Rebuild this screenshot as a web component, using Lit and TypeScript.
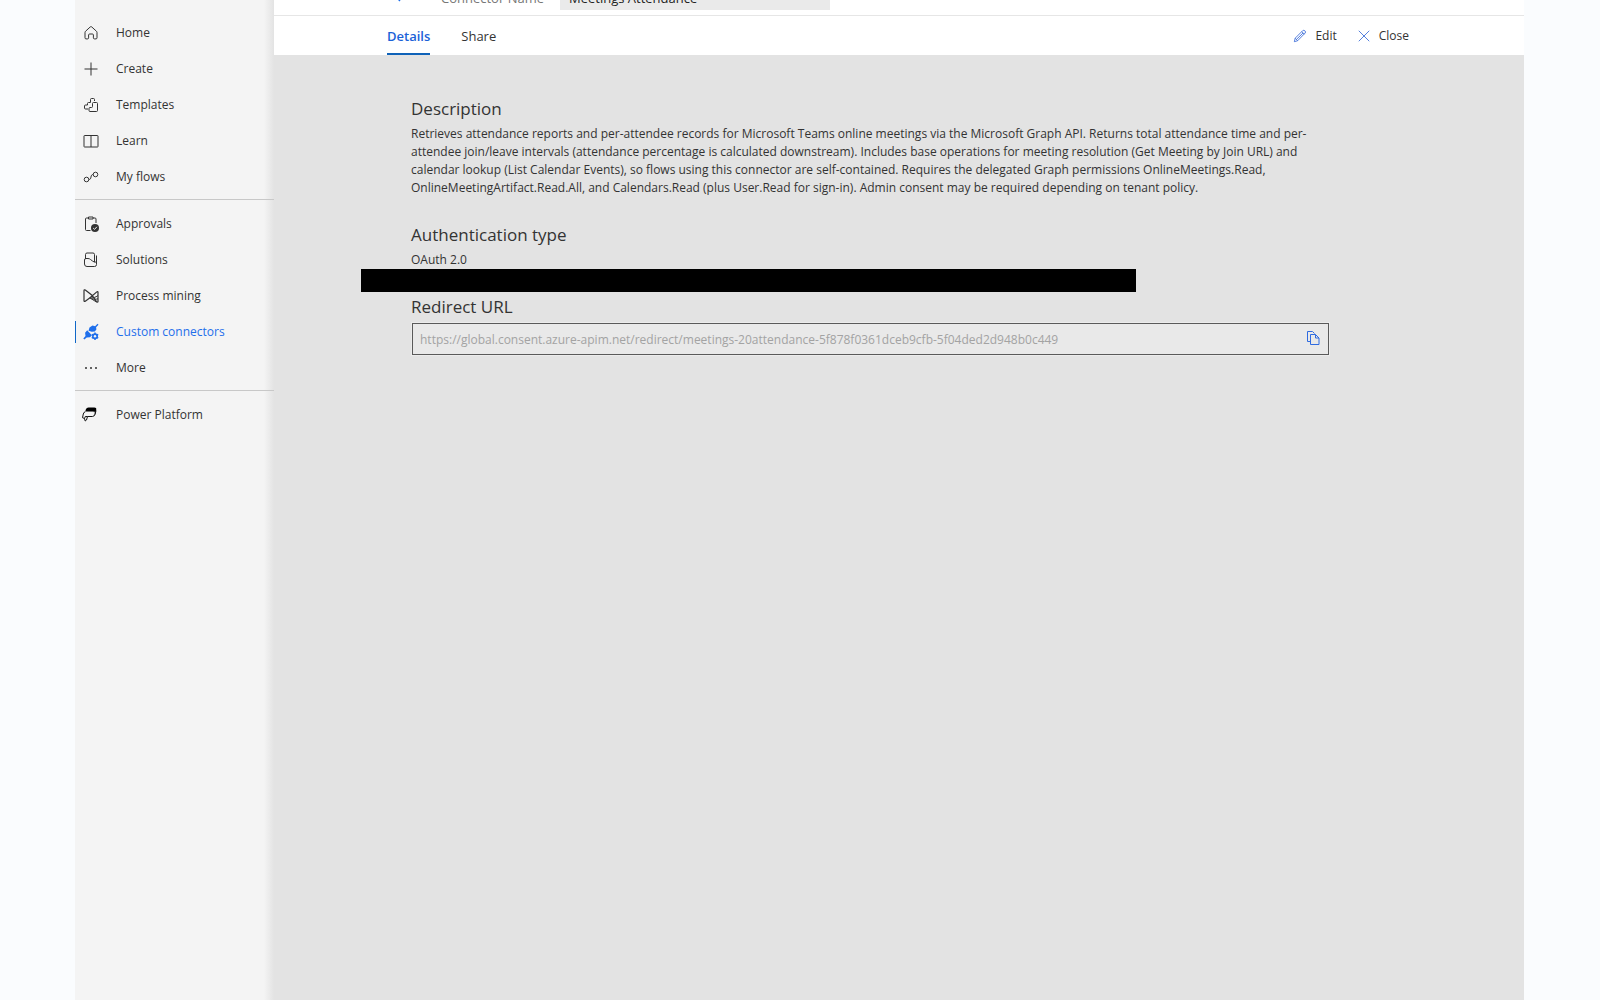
import { LitElement, html, css, svg, nothing } from "lit";
import type { SVGTemplateResult } from "lit";
import { customElement, state } from "lit/decorators.js";
import { classMap } from "lit/directives/class-map.js";

interface NavItem {
  label: string;
  icon: SVGTemplateResult;
  active?: boolean;
}

const icons = {
  home: svg`<path d="M2 7.6c0-.6.2-1 .6-1.400L7.300 1.900c.4-.4 1-.4 1.400 0l4.700 4.300c.4.4.6.8.6 1.400v5.200c0 .7-.4 1.100-1 1.100h-1.600c-.6 0-1-.4-1-1V10c0-.7-.4-1-1-1H6.600c-.6 0-1 .3-1 1v2.900c0 .6-.4 1-1 1H3c-.6 0-1-.4-1-1.100z"/>`,
  create: svg`<path d="M8 1.500v13M1.500 8h13"/>`,
  templates: svg`<path d="M5 12H2.500q-1 0-1-1V9q0-1 1-1H4.500V6.500q0-1 1-1H7.500V2.500q0-1 1-1h2q1 0 1 1V4"/><path d="M10.500 5.500h3q1 0 1 1v7q0 1-1 1H7q-1 0-1-1V11.500q0-1 1-1h1.500q1 0 1-1v-3q0-1 1-1z"/>`,
  learn: svg`<path d="M1.500 2.500h13q.5 0 .5.5v10.500q0 .5-.5.5h-13q-.5 0-.5-.5V3q0-.5.5-.5zM8 2.500V14"/>`,
  flows: svg`<circle cx="3.500" cy="10.500" r="2.300"/><circle cx="12.500" cy="5.500" r="2.300"/><path d="M5.800 10.500c1.700 0 2-1 2.200-2.500s.6-2.500 2.200-2.500"/>`,
  approvals: svg`<path d="M7.500 14.500H3.500q-1 0-1-1V3q0-1 1-1h2M10 2h2q1 0 1 1V7M5.500 1h4.500v2H5.500z"/><circle class="solid" cx="12" cy="12" r="4"/><path class="light" d="M10.200 12.100l1.300 1.300 2.400-2.600"/>`,
  solutions: svg`<path d="M2.500 7V2.500q0-1.500 1.500-1.500h6q1.500 0 1.500 1.500v7.500M13.500 3.500V12M5 6.500H3q-1.500 0-1.500 1.500v4q0 2.500 2.500 2.500h7.500q2 0 2-2v-2.500q-2 .8-4-1L7.500 7.500q-1-1-2.500-1z"/>`,
  mining: svg`<path stroke-width="1.200" d="M7 9.800L2.300 13.200q-1.300.700-1.300-.7V2.800q0-1.500 1.300-.7L9 7.200l4.500 6.500q1.500.9 1.500-.3V4.300q0-1.300-1.200-.4z"/><path d="M6.500 9.900c3.500.3 6-.6 8.500-2.300M8.500 10.600c2 .8 4.500.8 6.500.2M7 10l6.500 4"/>`,
  connectors: svg`<g class="solid"><path d="M5.500 6.800l1-3.300 3-2 2.600.7 2.400-2.400 1 1-2.400 2.400.3 2.200-1.600 2-3 .4z"/><path d="M.3 14.400l2.200-2.400-.4-3.200 2.100-2.600 4.700 5-1.900 2-3.300.2-2.300 2z"/><circle cx="12" cy="12.200" r="3"/></g><path stroke-width="1.500" d="M12 8.500v7.400M8.800 10.300l6.400 3.800M15.200 10.300l-6.400 3.800"/><circle class="hole" cx="12" cy="12.200" r="1.200"/>`,
  more: svg`<g class="solid"><circle cx="3" cy="8" r="1"/><circle cx="8" cy="8" r="1"/><circle cx="13" cy="8" r="1"/></g>`,
  platform: svg`<path class="shade" d="M2.600 4.800h7q2 .2 1.500 2l-.5 2q1.500 0 2-1.800l.6-2.500z"/><path class="ink" d="M2.300 4.500L2.800 2.500Q3.500.5 5.500.5h5.800q2.400 0 1.900 2.400l-.5 2.100q-1-.5-2.700-.5z"/><path class="inkline" d="M13 3.500L12.200 7q-.5 2.300-2.800 2.500H4.500L3.500 13l-1.300 1L1.500 11.500-.5 10.700.3 7Q.7 5 2.300 4.800M1.500 11.500L2.300 9.500h2.200"/>`,
  edit: svg`<path d="M1.500 14.500l1-4 8.600-8.600q1.300-1 2.500.2 1.400 1.300.3 2.500L5.300 13.400zM10 3l3 3M2.500 10.500l2.800 2.900M4 11.900l7.500-7.400"/>`,
  close: svg`<path d="M2 2l12 12M14 2L2 14"/>`,
  copy: svg`<path d="M5 11.500H2.500v-10h5l2 2"/><path d="M5.500 4.500h5L14 8v6.500H5.500zM10.500 4.500V8H14"/>`,
  back: svg`<path stroke-width="2" d="M14.500 8h-13M8 1.500L1.500 8 8 14.500"/>`,
};

const drawIcon = (shape: SVGTemplateResult) =>
  html`<svg class="icon" viewBox="0 0 16 16" aria-hidden="true">${shape}</svg>`;

const iconStyles = css`
  .icon {
    display: block;
    flex: none;
    width: 16px;
    height: 16px;
    overflow: visible;
    fill: none;
    stroke: currentColor;
    stroke-width: 1;
  }
  .icon .solid {
    fill: currentColor;
    stroke: none;
  }
  .icon .shade {
    fill: #aaa;
    stroke: none;
  }
  .icon .ink {
    fill: #000;
    stroke: none;
  }
  .icon .inkline {
    stroke: #111;
  }
  .icon .light {
    stroke: #f4f4f4;
  }
  .icon .hole {
    fill: #f4f4f4;
    stroke: none;
  }
`;

const navGroups: NavItem[][] = [
  [
    { label: "Home", icon: icons.home },
    { label: "Create", icon: icons.create },
    { label: "Templates", icon: icons.templates },
    { label: "Learn", icon: icons.learn },
    { label: "My flows", icon: icons.flows },
  ],
  [
    { label: "Approvals", icon: icons.approvals },
    { label: "Solutions", icon: icons.solutions },
    { label: "Process mining", icon: icons.mining },
    { label: "Custom connectors", icon: icons.connectors, active: true },
    { label: "More", icon: icons.more },
  ],
  [{ label: "Power Platform", icon: icons.platform }],
];

@customElement("side-nav")
export class SideNav extends LitElement {
  static styles = [
    iconStyles,
    css`
      :host {
        display: block;
        padding-top: 15px;
        background: linear-gradient(to left, #e3e3e3, #f4f4f4 10px);
      }
      .group {
        list-style: none;
        margin: 0;
        padding: 0 0 4px;
      }
      .group + .group {
        border-top: 1px solid #c8c8c8;
        padding-top: 6px;
      }
      .link {
        display: flex;
        align-items: center;
        gap: 17px;
        height: 36px;
        padding-left: 8px;
        color: #333;
        text-decoration: none;
      }
      .link.active {
        color: #1f6feb;
        background: linear-gradient(#1068c8, #1068c8) left center / 1px 22px no-repeat;
      }
    `,
  ];

  render() {
    return html`<nav aria-label="Main">
      ${navGroups.map(
        (group) => html`<ul class="group">
          ${group.map(
            (item) => html`<li>
              <a
                href="#"
                class=${classMap({ link: true, active: !!item.active })}
                aria-current=${item.active ? "page" : nothing}
                >${drawIcon(item.icon)}<span>${item.label}</span></a
              >
            </li>`
          )}
        </ul>`
      )}
    </nav>`;
  }
}

@customElement("connector-details")
export class ConnectorDetails extends LitElement {
  static styles = [
    iconStyles,
    css`
      :host {
        display: block;
        padding: 42px 195px 42px 137px;
      }
      .heading {
        margin: 0 0 4px;
        font-size: 17px;
        font-weight: 400;
        line-height: 24px;
      }
      .text {
        margin: 0;
        line-height: 18px;
      }
      .section {
        margin-bottom: 26px;
      }
      .section.tight {
        margin-bottom: 0;
      }
      .redacted {
        max-width: 775px;
        height: 23px;
        margin: 0 0 3px -50px;
        background: #000;
      }
      .field {
        display: flex;
        align-items: center;
        box-sizing: border-box;
        height: 32px;
        margin-left: 1px;
        padding: 0 7px;
        border: 1px solid #5a5a5a;
        background: #e9e9e9;
        outline: 1px solid #ececec;
      }
      .url {
        flex: 1;
        min-width: 0;
        padding: 2px 0 0;
        border: 0;
        background: none;
        font: inherit;
        color: #a3a3a3;
      }
      .copy {
        padding: 0 0 2px;
        border: 0;
        background: none;
        color: #2f6be0;
      }
    `,
  ];

  @state() private url =
    "https://global.consent.azure-apim.net/redirect/meetings-20attendance-5f878f0361dceb9cfb-5f04ded2d948b0c449";

  render() {
    return html`
      <section class="section">
        <h2 class="heading">Description</h2>
        <p class="text">
          Retrieves attendance reports and per-attendee records for Microsoft Teams online meetings via the Microsoft
          Graph API. Returns total attendance time and per-attendee join/leave intervals (attendance percentage is
          calculated downstream). Includes base operations for meeting resolution (Get Meeting by Join URL) and calendar
          lookup (List Calendar Events), so flows using this connector are self-contained. Requires the delegated Graph
          permissions OnlineMeetings.Read, OnlineMeetingArtifact.Read.All, and Calendars.Read (plus User.Read for
          sign-in). Admin consent may be required depending on tenant policy.
        </p>
      </section>
      <section class="section tight">
        <h2 class="heading">Authentication type</h2>
        <p class="text">OAuth 2.0</p>
      </section>
      <div class="redacted"></div>
      <section>
        <h2 class="heading"><label for="redirect">Redirect URL</label></h2>
        <div class="field">
          <input id="redirect" class="url" type="text" readonly .value=${this.url} />
          <button class="copy" type="button" aria-label="Copy">${drawIcon(icons.copy)}</button>
        </div>
      </section>
    `;
  }
}

@customElement("app-root")
export class AppRoot extends LitElement {
  static styles = [
    iconStyles,
    css`
      :host {
        display: grid;
        grid-template-columns: 199px 1fr;
        box-sizing: border-box;
        min-height: 100vh;
        padding: 0 76px 0 75px;
        background: #fafcfe;
        color: #333;
        font-family: "Open Sans", "Noto Sans", sans-serif;
        font-size: 12px;
        line-height: 18px;
      }
      .main {
        min-width: 0;
        background: #e3e3e3;
      }
      .name-bar {
        display: flex;
        align-items: flex-end;
        box-sizing: border-box;
        height: 16px;
        padding: 0 113px 5px;
        overflow: hidden;
        background: #fff;
        border-bottom: 1px solid #e6e6e6;
        font-size: 13px;
      }
      .back {
        margin: 0 35px 8px 7px;
        padding: 0;
        border: 0;
        background: none;
        color: #1f6feb;
      }
      .back .icon {
        width: 12px;
        height: 12px;
      }
      .name-label {
        flex: none;
        width: 119px;
        line-height: 24px;
        color: #767676;
      }
      .name-input {
        box-sizing: border-box;
        width: 270px;
        height: 24px;
        padding: 0 9px;
        border: 0;
        background: #eaeaea;
        font: inherit;
        color: #222;
      }
      .tool-bar {
        display: flex;
        justify-content: space-between;
        height: 39px;
        padding: 0 115px 0 113px;
        background: #fff;
      }
      .tabs,
      .actions {
        display: flex;
      }
      .tabs {
        gap: 31px;
        font-size: 13px;
      }
      .actions {
        gap: 20px;
      }
      .tab,
      .action {
        padding: 0;
        border: 0;
        background: none;
        font: inherit;
        color: inherit;
      }
      .tab {
        border-top: 2px solid transparent;
        border-bottom: 2px solid transparent;
      }
      .tab.selected {
        border-bottom-color: #0f62b8;
        color: #1b62d8;
        font-weight: 600;
      }
      .action {
        display: flex;
        align-items: center;
        gap: 8px;
      }
      .action .icon {
        width: 14px;
        height: 14px;
        color: #3f6fd8;
      }
    `,
  ];

  @state() private selected = "Details";

  render() {
    return html`
      <side-nav></side-nav>
      <main class="main">
        <div class="name-bar">
          <button class="back" type="button" aria-label="Back">${drawIcon(icons.back)}</button>
          <label class="name-label" for="name">Connector Name</label>
          <input id="name" class="name-input" type="text" value="Meetings Attendance" />
        </div>
        <div class="tool-bar">
          <div class="tabs" role="tablist">
            ${["Details", "Share"].map(
              (tab) => html`<button
                type="button"
                role="tab"
                class=${classMap({ tab: true, selected: tab === this.selected })}
                aria-selected=${tab === this.selected}
                @click=${() => (this.selected = tab)}
              >
                ${tab}
              </button>`
            )}
          </div>
          <div class="actions">
            <button class="action" type="button">${drawIcon(icons.edit)}Edit</button>
            <button class="action" type="button">${drawIcon(icons.close)}Close</button>
          </div>
        </div>
        <connector-details></connector-details>
      </main>
    `;
  }
}
